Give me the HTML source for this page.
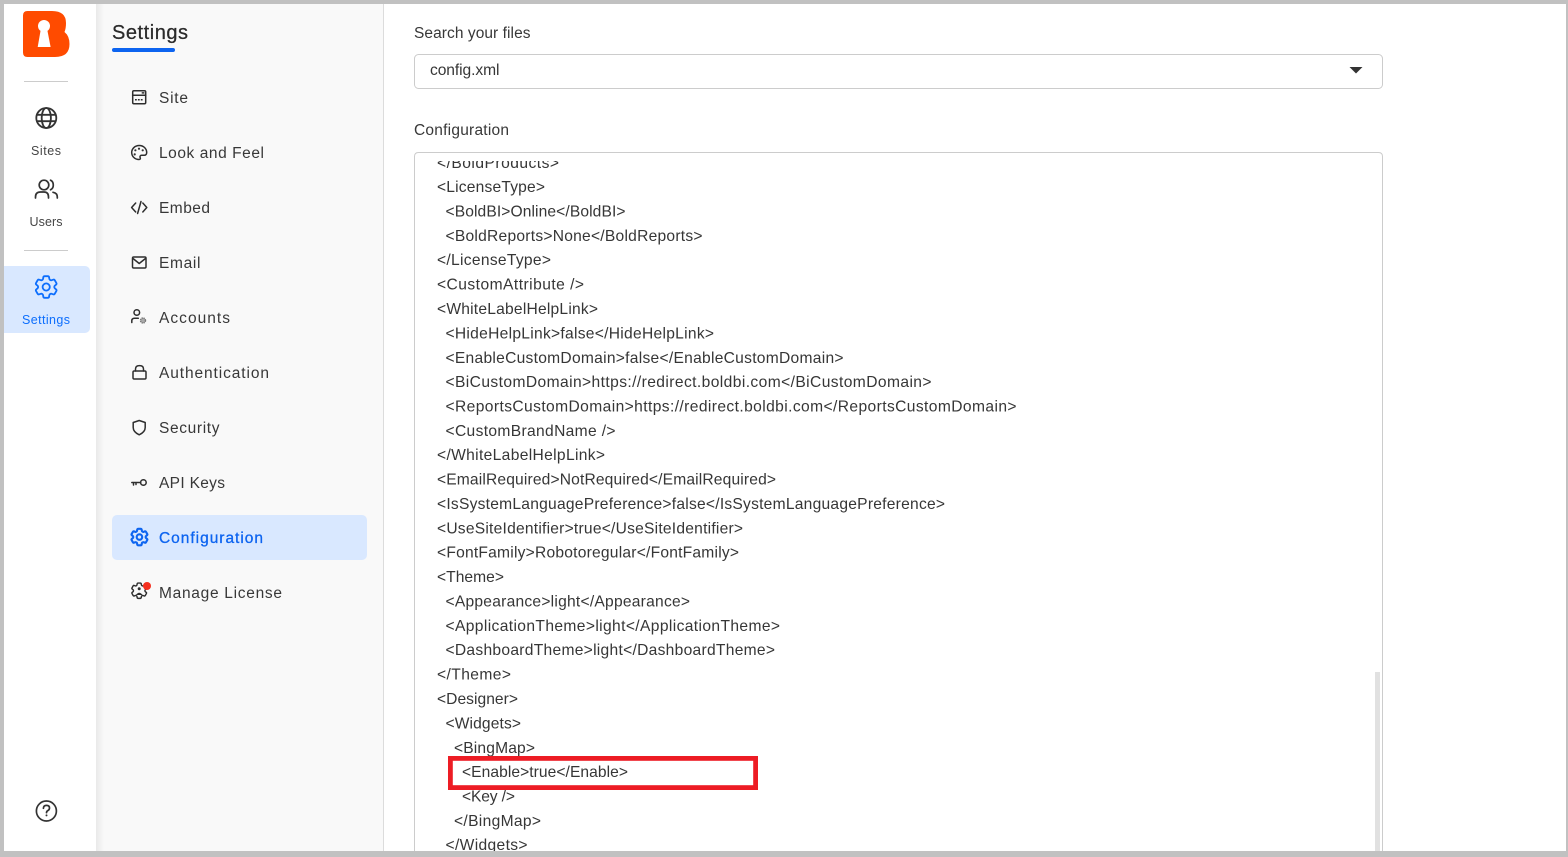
<!DOCTYPE html>
<html lang="en"><head><meta charset="utf-8"><title>Settings - Configuration</title>
<style>
html,body{margin:0;padding:0;width:1568px;height:857px;overflow:hidden;background:#fff}
svg{display:block}
text{font-family:"Liberation Sans",Arial,sans-serif;fill:#383838}
.nav{font-size:15.5px}
.code{font-size:15.6px;fill:#363636}
.rail{font-size:12.5px;fill:#454545;text-anchor:start}
.i{fill:none;stroke:#2e2e2e;stroke-width:1.5;stroke-linecap:round;stroke-linejoin:round}
</style></head><body>
<svg width="1568" height="857" viewBox="0 0 1568 857" xmlns="http://www.w3.org/2000/svg">
<defs>
<linearGradient id="sh" x1="0" x2="1" y1="0" y2="0"><stop offset="0" stop-color="#e9e9e9"/><stop offset="1" stop-color="#f9f9f9"/></linearGradient>
<clipPath id="ta"><rect x="415" y="161" width="960" height="690"/></clipPath>
<path id="gear" d="M9.594 3.94c.09-.542.56-.94 1.11-.94h2.593c.55 0 1.02.398 1.11.94l.213 1.281c.063.374.313.686.645.87.074.04.147.083.22.127.325.196.72.257 1.075.124l1.217-.456a1.125 1.125 0 0 1 1.37.49l1.296 2.247a1.125 1.125 0 0 1-.26 1.431l-1.003.827c-.293.241-.438.613-.43.992a7.723 7.723 0 0 1 0 .255c-.008.378.137.75.43.991l1.004.827c.424.35.534.955.26 1.43l-1.298 2.247a1.125 1.125 0 0 1-1.369.491l-1.217-.456c-.355-.133-.75-.072-1.076.124a6.47 6.47 0 0 1-.22.128c-.331.183-.581.495-.644.869l-.213 1.281c-.09.543-.56.94-1.11.94h-2.594c-.55 0-1.019-.398-1.11-.94l-.213-1.281c-.062-.374-.312-.686-.644-.87a6.52 6.52 0 0 1-.22-.127c-.325-.196-.72-.257-1.076-.124l-1.217.456a1.125 1.125 0 0 1-1.369-.49l-1.297-2.247a1.125 1.125 0 0 1 .26-1.431l1.004-.827c.292-.24.437-.613.43-.991a6.932 6.932 0 0 1 0-.255c.007-.38-.138-.751-.43-.992l-1.004-.827a1.125 1.125 0 0 1-.26-1.43l1.297-2.247a1.125 1.125 0 0 1 1.37-.491l1.216.456c.356.133.751.072 1.076-.124.072-.044.146-.086.22-.128.332-.183.582-.495.644-.869l.214-1.28Z"/>
</defs>

<!-- sidebar backgrounds -->
<rect x="96" y="0" width="287" height="857" fill="#f9f9f9"/>
<rect x="96" y="0" width="8" height="857" fill="url(#sh)"/>
<rect x="383" y="0" width="1" height="857" fill="#dcdcdc"/>

<!-- logo -->
<path d="M27.5 11H52Q66 11 66 23Q66 28.5 64.5 32Q69.5 36 69.5 44Q69.5 57 55 57H27.5Q23 57 23 52.5V15.5Q23 11 27.5 11Z" fill="#ff4b00"/>
<circle cx="44" cy="26" r="6" fill="#fff"/>
<path d="M40.5 31H47.5L50.6 47H37.7Z" fill="#fff"/>

<rect x="24" y="81" width="44" height="1" fill="#ccc"/>
<rect x="24" y="250" width="44" height="1" fill="#ccc"/>

<!-- rail: Sites -->
<g fill="none" stroke="#333" stroke-width="1.8">
<circle cx="46.3" cy="118" r="10"/>
<ellipse cx="46.3" cy="118" rx="4.6" ry="10"/>
<path d="M36.5 114.8H56M36.5 121.2H56"/>
</g>
<text class="rail" x="31" y="155" textLength="30" lengthAdjust="spacing">Sites</text>

<!-- rail: Users -->
<g fill="none" stroke="#333" stroke-width="1.7" stroke-linecap="round">
<circle cx="44" cy="185" r="4.8"/>
<path d="M35.5 198V197Q35.5 192 40.5 192H44Q48.5 192 48.5 197V198"/>
<path d="M50.5 180.2Q53.3 181.5 53.3 185T50.5 189.8"/>
<path d="M53 192.3Q57.3 193 57.3 197V198"/>
</g>
<text class="rail" x="29.5" y="226" textLength="33" lengthAdjust="spacing">Users</text>

<!-- rail: Settings active -->
<rect x="4" y="266" width="86" height="67" rx="5" fill="#d9e8ff"/>
<rect x="4" y="266" width="8" height="67" fill="#d9e8ff"/>
<g transform="translate(31.8 272.6) scale(1.2)" fill="none" stroke="#0d6efd" stroke-width="1.5" stroke-linejoin="round">
<use href="#gear"/><circle cx="12" cy="12" r="3"/>
</g>
<text class="rail" x="22" y="324" textLength="48" lengthAdjust="spacing" style="fill:#0d6efd">Settings</text>

<!-- help -->
<circle cx="46.4" cy="811" r="10" fill="none" stroke="#333" stroke-width="1.7"/>
<path d="M43.4 808.3Q43.6 805.4 46.5 805.4Q49.5 805.4 49.5 808Q49.5 809.7 47.8 810.6Q46.5 811.3 46.5 812.7" fill="none" stroke="#333" stroke-width="1.7" stroke-linecap="round"/>
<circle cx="46.5" cy="815.4" r="1" fill="#333"/>

<!-- settings heading -->
<text x="112" y="39" style="font-size:20px;fill:#2a2a2a;stroke:#2a2a2a;stroke-width:.25" textLength="76" lengthAdjust="spacing">Settings</text>
<rect x="112" y="48" width="63" height="4" rx="2" fill="#0d64f0"/>

<!-- active nav -->
<rect x="112" y="515" width="255" height="45" rx="5" fill="#d9e8ff"/>

<!-- nav icons -->
<g class="i">
<rect x="132.7" y="90.7" width="13" height="13" rx="1.2"/><path d="M132.7 95.2H145.7"/><path d="M135 99.7H143.5" stroke-dasharray="1.8 1.1" stroke-linecap="butt"/><path d="M142.3 92.9H143.8"/>
<path d="M139.2 145.5C135 145.5 131.7 148.7 131.7 152.5C131.7 156.5 135 159.5 139 159.5C140.3 159.5 140.6 158.6 140.2 157.7C139.6 156.5 140.3 155.3 141.6 155.3H144.2C145.8 155.3 146.7 154 146.7 152.5C146.7 148.5 143.4 145.5 139.2 145.5Z"/>
<path d="M135.7 203L131.6 207.5L135.7 212M142.8 203L146.8 207.5L142.8 212M141 201.5L137.6 213.5"/>
<rect x="132.5" y="257" width="13.5" height="11" rx="1.2"/><path d="M133 258.5L139.2 263.5L145.5 258.5"/>
<circle cx="136.8" cy="312.5" r="2.8"/><path d="M131.8 322.5V320.8Q131.8 318.3 134.5 318.3H138.3"/>
<rect x="133" y="371" width="13" height="8" rx="1.2"/><path d="M135.5 371V369Q135.5 365.6 139.5 365.6T143.5 369V371"/>
<path d="M139.2 420.5L145.2 422.5V427.5Q145.2 432 139.2 434.8Q133.2 432 133.2 427.5V422.5Z"/>
<circle cx="143.4" cy="482.5" r="2.8"/><path d="M140.6 482.5H131.8M133.5 482.5V485M136 482.5V484.5"/>
</g>
<circle cx="143" cy="320.5" r="2.5" fill="#aaa" stroke="#777" stroke-width="1.4" stroke-dasharray="1.3 .7"/>
<circle cx="134.7" cy="154.4" r="1.1" fill="#333"/><circle cx="135.4" cy="150.3" r="1.1" fill="#333"/><circle cx="139" cy="148.7" r="1.1" fill="#333"/><circle cx="142.7" cy="150.3" r="1.1" fill="#333"/>
<g transform="translate(128.4 526) scale(.92)" fill="none" stroke="#0d64f0" stroke-width="2.3" stroke-linejoin="round"><use href="#gear"/><circle cx="12" cy="12" r="3"/></g>
<g transform="translate(129 580.5) scale(.85)" fill="none" stroke="#2e2e2e" stroke-width="1.7" stroke-linejoin="round"><use href="#gear"/></g>
<circle cx="139.2" cy="588.8" r="1.5" fill="#2e2e2e"/><path d="M135.8 595Q139.2 590.5 142.6 595Z" fill="#2e2e2e"/>
<circle cx="147" cy="586" r="4" fill="#f5301f"/>

<!-- nav labels -->
<g class="nav">
<text class="nav" x="159" y="103" textLength="29" lengthAdjust="spacing">Site</text>
<text class="nav" x="159" y="158" textLength="105" lengthAdjust="spacing">Look and Feel</text>
<text class="nav" x="159" y="213" textLength="51" lengthAdjust="spacing">Embed</text>
<text class="nav" x="159" y="268" textLength="41.5" lengthAdjust="spacing">Email</text>
<text class="nav" x="159" y="323" textLength="71" lengthAdjust="spacing">Accounts</text>
<text class="nav" x="159" y="378" textLength="110" lengthAdjust="spacing">Authentication</text>
<text class="nav" x="159" y="433" textLength="60.5" lengthAdjust="spacing">Security</text>
<text class="nav" x="159" y="488" textLength="66" lengthAdjust="spacing">API Keys</text>
<text class="nav" x="159" y="543" textLength="104" lengthAdjust="spacing" style="fill:#0d64f0;stroke:#0d64f0;stroke-width:.3">Configuration</text>
<text class="nav" x="159" y="598" textLength="123" lengthAdjust="spacing">Manage License</text>
</g>

<!-- form -->
<text class="nav" x="414" y="38" textLength="116.5" lengthAdjust="spacing">Search your files</text>
<rect x="414.5" y="54.5" width="968" height="34" rx="4" fill="#fff" stroke="#ccc"/>
<text class="code" x="430" y="75" textLength="69.5" lengthAdjust="spacing">config.xml</text>
<path d="M1349.5 67H1362.5L1356 73.5Z" fill="#333"/>
<text class="nav" x="414" y="135" textLength="95" lengthAdjust="spacing">Configuration</text>
<path d="M414.5 858V156.5Q414.5 152.5 418.5 152.5H1378.5Q1382.5 152.5 1382.5 156.5V858" fill="#fff" stroke="#ccc"/>
<rect x="1375" y="672" width="5" height="185" fill="#e1e1e1"/>

<!-- code -->
<g class="code" clip-path="url(#ta)">
<text class="code" x="437" y="168" textLength="122" lengthAdjust="spacing">&lt;/BoldProducts&gt;</text>
<text class="code" x="437" y="192" textLength="108" lengthAdjust="spacing">&lt;LicenseType&gt;</text>
<text class="code" x="445.5" y="216.5" textLength="180" lengthAdjust="spacing">&lt;BoldBI&gt;Online&lt;/BoldBI&gt;</text>
<text class="code" x="445.5" y="241" textLength="257" lengthAdjust="spacing">&lt;BoldReports&gt;None&lt;/BoldReports&gt;</text>
<text class="code" x="437" y="265" textLength="114" lengthAdjust="spacing">&lt;/LicenseType&gt;</text>
<text class="code" x="437" y="289.5" textLength="147" lengthAdjust="spacing">&lt;CustomAttribute /&gt;</text>
<text class="code" x="437" y="314" textLength="161" lengthAdjust="spacing">&lt;WhiteLabelHelpLink&gt;</text>
<text class="code" x="445.5" y="338.5" textLength="268.5" lengthAdjust="spacing">&lt;HideHelpLink&gt;false&lt;/HideHelpLink&gt;</text>
<text class="code" x="445.5" y="363" textLength="398" lengthAdjust="spacing">&lt;EnableCustomDomain&gt;false&lt;/EnableCustomDomain&gt;</text>
<text class="code" x="445.5" y="387" textLength="486" lengthAdjust="spacing">&lt;BiCustomDomain&gt;https://redirect.boldbi.com&lt;/BiCustomDomain&gt;</text>
<text class="code" x="445.5" y="411.5" textLength="571" lengthAdjust="spacing">&lt;ReportsCustomDomain&gt;https://redirect.boldbi.com&lt;/ReportsCustomDomain&gt;</text>
<text class="code" x="445.5" y="436" textLength="170" lengthAdjust="spacing">&lt;CustomBrandName /&gt;</text>
<text class="code" x="437" y="460" textLength="168" lengthAdjust="spacing">&lt;/WhiteLabelHelpLink&gt;</text>
<text class="code" x="437" y="484.5" textLength="339" lengthAdjust="spacing">&lt;EmailRequired&gt;NotRequired&lt;/EmailRequired&gt;</text>
<text class="code" x="437" y="509" textLength="508" lengthAdjust="spacing">&lt;IsSystemLanguagePreference&gt;false&lt;/IsSystemLanguagePreference&gt;</text>
<text class="code" x="437" y="533.5" textLength="306" lengthAdjust="spacing">&lt;UseSiteIdentifier&gt;true&lt;/UseSiteIdentifier&gt;</text>
<text class="code" x="437" y="557.5" textLength="302" lengthAdjust="spacing">&lt;FontFamily&gt;Robotoregular&lt;/FontFamily&gt;</text>
<text class="code" x="437" y="582" textLength="67" lengthAdjust="spacing">&lt;Theme&gt;</text>
<text class="code" x="445.5" y="606.5" textLength="244.5" lengthAdjust="spacing">&lt;Appearance&gt;light&lt;/Appearance&gt;</text>
<text class="code" x="445.5" y="631" textLength="334.5" lengthAdjust="spacing">&lt;ApplicationTheme&gt;light&lt;/ApplicationTheme&gt;</text>
<text class="code" x="445.5" y="655" textLength="329.5" lengthAdjust="spacing">&lt;DashboardTheme&gt;light&lt;/DashboardTheme&gt;</text>
<text class="code" x="437" y="679.5" textLength="74" lengthAdjust="spacing">&lt;/Theme&gt;</text>
<text class="code" x="437" y="704" textLength="81" lengthAdjust="spacing">&lt;Designer&gt;</text>
<text class="code" x="445.5" y="728.5" textLength="75.5" lengthAdjust="spacing">&lt;Widgets&gt;</text>
<text class="code" x="454" y="753" textLength="81" lengthAdjust="spacing">&lt;BingMap&gt;</text>
<text class="code" x="462" y="777" textLength="166" lengthAdjust="spacing">&lt;Enable&gt;true&lt;/Enable&gt;</text>
<text class="code" x="462" y="801.5" textLength="53" lengthAdjust="spacing">&lt;Key /&gt;</text>
<text class="code" x="454" y="826" textLength="87" lengthAdjust="spacing">&lt;/BingMap&gt;</text>
<text class="code" x="445.5" y="850" textLength="82" lengthAdjust="spacing">&lt;/Widgets&gt;</text>
</g>

<!-- red highlight -->
<rect x="450.4" y="758.4" width="305.2" height="29.2" fill="none" stroke="#ed1c24" stroke-width="4.8"/>

<!-- screenshot frame -->
<rect x="0" y="0" width="1568" height="4" fill="#c1c1c1"/>
<rect x="0" y="0" width="4" height="857" fill="#c1c1c1"/>
<rect x="1566" y="0" width="2" height="857" fill="#c1c1c1"/>
<rect x="0" y="851" width="1568" height="6" fill="#c1c1c1"/>
</svg>
</body></html>
